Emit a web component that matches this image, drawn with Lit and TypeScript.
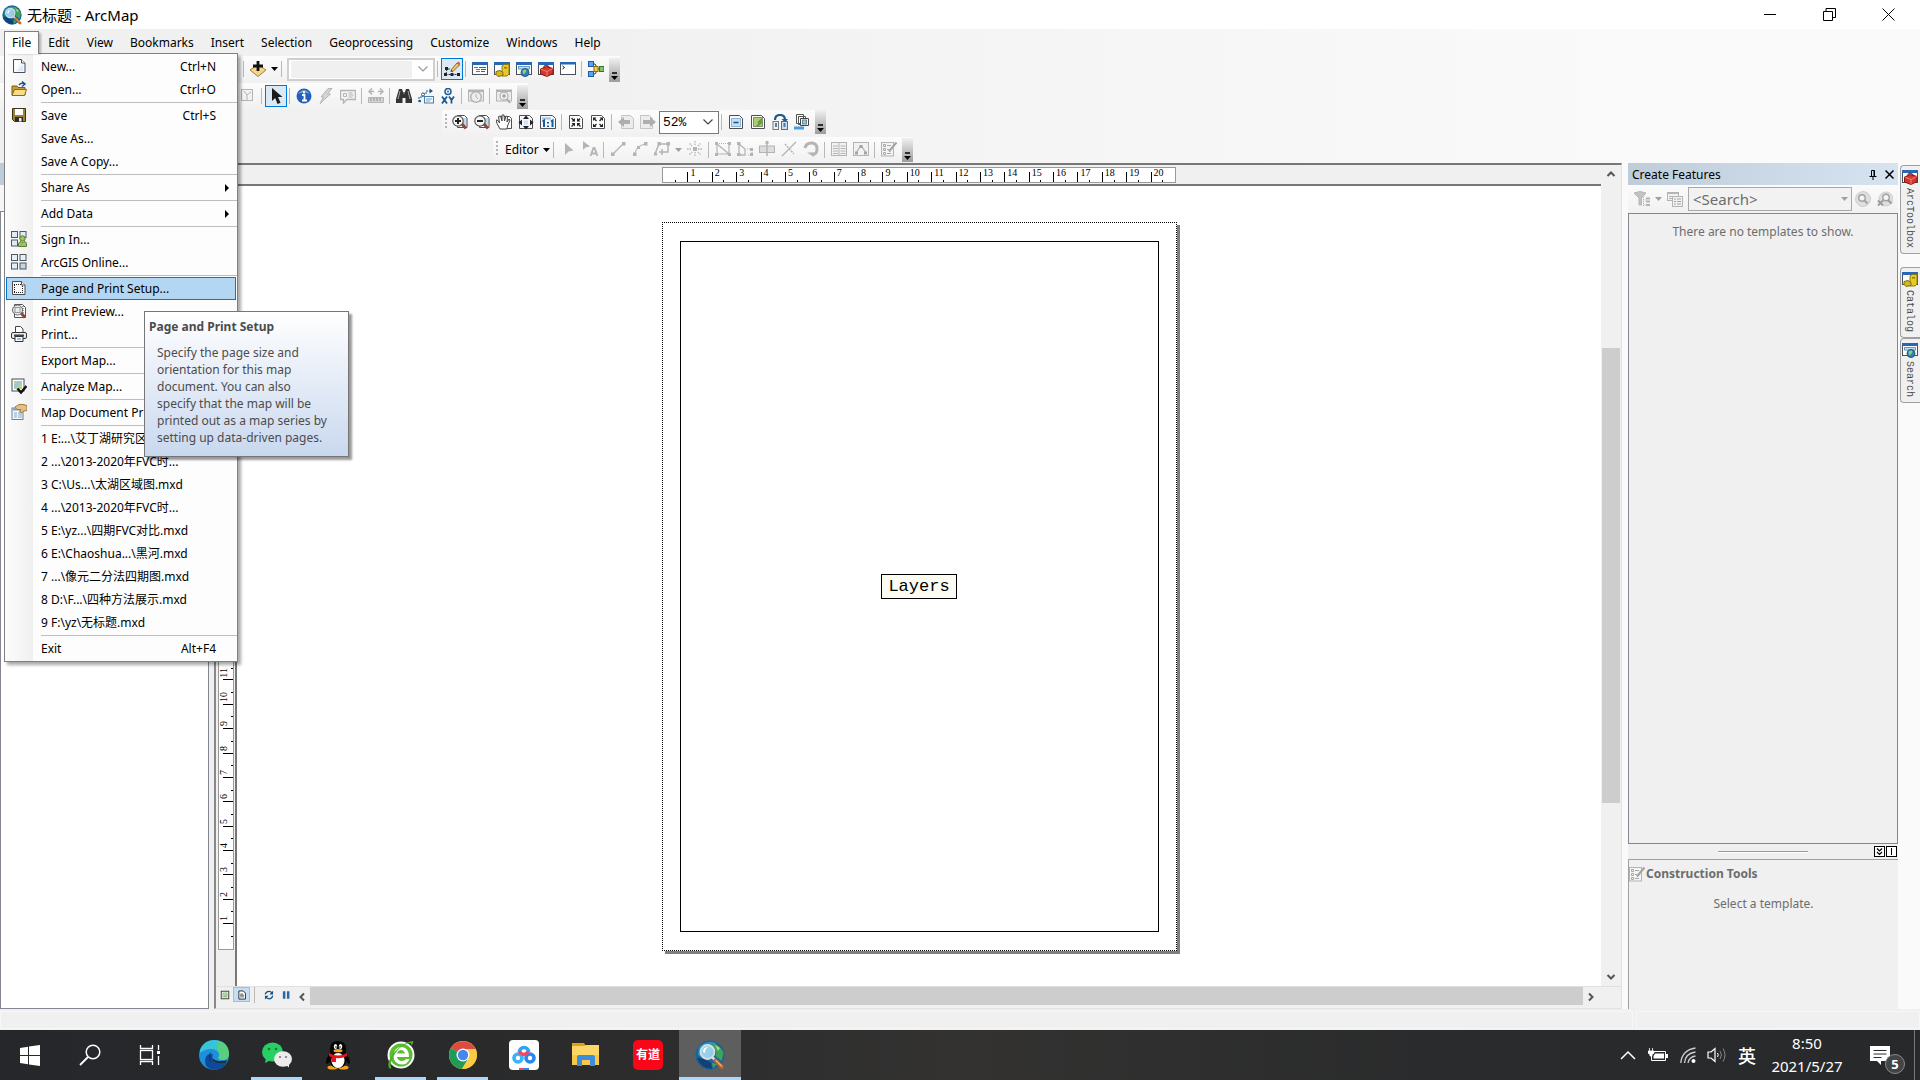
import { LitElement, html, css, svg, nothing, TemplateResult } from "lit";
import { customElement } from "lit/decorators.js";

const G = "#b4b4b4";
const page = (extra: unknown) => svg`<path d="M2.500 1.500h8l3.500 3.500v9.500h-11.500z" fill="#f4f8fd" stroke="#4d4d55"/><path d="M10.500 1.500v3.500h3.500" fill="#fff" stroke="#4d4d55"/>${extra}`;
const win = (extra: unknown) => svg`<rect x=".5" y="1.500" width="15" height="12" fill="#fdfdfd" stroke="#4b4f58"/><rect x="0" y="1" width="16" height="3" fill="#2767b5"/>${extra}`;
const lens = (extra: unknown) => svg`<path d="M5.500 1.500h7l2.500 2.500v9.500h-9.500z" fill="#fff" stroke="#4d4d55"/><rect x="10" y="4" width="4" height="7" fill="#b9dcf5"/><path d="M10 10l4 4.500" stroke="#8b4a35" stroke-width="3"/><circle cx="6" cy="7" r="5.200" fill="#f7f7f7" stroke="#555" stroke-width="1.200"/>${extra}`;
const globe = svg`<circle cx="15" cy="15" r="14.500" fill="#1a6496"/><path d="M4 7q7-7 17-4l-1 6-5 3-1 5-5 2-6-4z" fill="#2f8fb5"/><path d="M18 3q8 3 10.500 10l-2 8-6-5 1-4-4-4z" fill="#3fa35c"/><path d="M20 5l5 3-2 3z" fill="#a9dc7c"/><path d="M2 18q4 11 15 11l-1-6-7-4z" fill="#143f77"/><path d="M17 23l5 1-4 4z" fill="#3fa35c"/><circle cx="12.500" cy="12" r="7" fill="#a9dcf2" fill-opacity=".85" stroke="#d5dfe3" stroke-width="1.800"/><path d="M8 12q0-5 6-5-4 1-4 6z" fill="#fff"/><path d="M17.500 17.500l3 3" stroke="#ddd" stroke-width="2.500"/><path d="M20.500 20.500l6.500 6.500" stroke="#b5622c" stroke-width="4" stroke-linecap="round"/><path d="M21 20.500l5.500 5.500" stroke="#f0b277" stroke-width="1.300" stroke-linecap="round"/>`;

const ICONS: Record<string, unknown> = {
  new: page(svg`<path d="M4 13V3h5z" fill="#fff"/><path d="M12 6v7H6z" fill="#dbe9f6"/>`),
  open: svg`<path d="M1 14V5h5l1 1.500h7V14z" fill="#c79a32" stroke="#7a5c17"/><path d="M1 14.500l2.500-6h12l-2 6z" fill="#f6dc86" stroke="#8a6a22"/><path d="M8 4q2-2.500 5-1.500M11 .5l3 2.500-3 2.500" fill="none" stroke="#17528f" stroke-width="1.500"/>`,
  save: svg`<path d="M1.500 1.500h13v13h-11l-2-2z" fill="#9a8434" stroke="#3a3320"/><rect x="4" y="2" width="8" height="6" fill="#fff"/><rect x="4" y="10" width="8" height="4.500" fill="#2c2c2c"/><rect x="8" y="11" width="2.500" height="3.500" fill="#eee"/>`,
  grid: svg`<g stroke="#4f565e" fill="#e4eff8"><rect x=".5" y=".5" width="6" height="6"/><rect x="9" y=".5" width="6" height="6"/><rect x=".5" y="9" width="6" height="6"/><rect x="9" y="9" width="6" height="6" fill="#c4d6e6"/></g>`,
  signin: svg`<g stroke="#4f565e" fill="#dfecf6"><rect x=".5" y=".5" width="6" height="6"/><rect x="9" y=".5" width="6" height="6"/><rect x=".5" y="9" width="6" height="6"/></g><circle cx="11.500" cy="7.500" r="2.700" fill="#9cc068" stroke="#5d7f36"/><path d="M7.500 15.500v-3q1-2 2.500-2l1.500 1.500L13 10.500q2 0 2.500 2v3z" fill="#9cc068" stroke="#5d7f36"/>`,
  pagesetup: svg`<path d="M1.500 1.500h9l3.500 3.500v9.500H1.500z" fill="#f7f7f7" stroke="#4d4d55"/><path d="M10.500 1.500v3.500h3.500" fill="#fff" stroke="#4d4d55"/><path d="M3 4.500h7M3.500 5v8M3 12.500h9M11.500 6v7" stroke="#222" stroke-dasharray="1 1" fill="none"/>`,
  preview: svg`<path d="M3.500 1.500h8l3 3v10h-11z" fill="#fff" stroke="#555"/><path d="M10 10l4 4.500" stroke="#8b4a35" stroke-width="3"/><circle cx="6.500" cy="7" r="5" fill="#e6eaee" fill-opacity=".9" stroke="#666"/><rect x="4" y="4.500" width="5" height="5" fill="none" stroke="#999"/><path d="M12 3v8" stroke="#444" stroke-dasharray="1 1"/>`,
  print: svg`<path d="M4.500 6V.5h5l2.500 2.500V6" fill="#fff" stroke="#444"/><rect x=".5" y="6.500" width="15" height="6" rx="1.500" fill="#ececec" stroke="#333"/><rect x="3" y="8.500" width="10" height="2" fill="#444"/><path d="M4 10.500h8v5H4z" fill="#fff" stroke="#333"/><path d="M6 13h4" stroke="#3b77b5"/>`,
  analyze: svg`<rect x="1" y="1" width="12" height="12" fill="#fff" stroke="#4d4d55"/><rect x="3" y="3" width="8" height="8" fill="#b7d48c"/><path d="M3 11V7l4-4h4l-4 5z" fill="#9fc4de"/><path d="M6.500 10.500l3.500 4L15.500 8" fill="none" stroke="#111" stroke-width="2.500"/>`,
  props: svg`<rect x="1" y="4" width="11" height="11.500" fill="#f3f8fc" stroke="#6d8296"/><rect x="1.500" y="4.500" width="10" height="2" fill="#6fa3cf"/><path d="M3 9h3M7 9h4M3 11h3M7 11h4M3 13h3M7 13h4" stroke="#86a8c5"/><path d="M4 3l4-2.500h4l4 1v5l-3 .5-3 2-1.500-1L10 5.500H6z" fill="#e5bf86" stroke="#a47b43"/>`,
  adddata: svg`<path d="M0 9l8-5.500L16 9l-8 6.500z" fill="#f3d48a" stroke="#a4813c"/><path d="M8 0v10M3 5h10" stroke="#111" stroke-width="2.800"/>`,
  editor: svg`<path d="M1.500 13.500h13M2 13l1-5h3" fill="none" stroke="#333" stroke-dasharray="2 1"/><g fill="#222"><rect x="0" y="12" width="3" height="3"/><rect x="6.500" y="12" width="3" height="3"/><rect x="13" y="12" width="3" height="3"/><rect x="1" y="6" width="3" height="3"/></g><path d="M7 9l6-7 2.500 2L9 10.500z" fill="#f0c46a" stroke="#8f6a2c"/><path d="M13 2l1.500-1.500 2 2L15.500 4z" fill="#d05a50"/><path d="M6.500 11l.5-2 2 1.500z" fill="#333"/>`,
  toc: win(svg`<path d="M2 6.500h4M4 8.500h4M4 10.500h4" stroke="#3c7ec9"/><path d="M7 6.500h7M9 8.500h5M9 10.500h4" stroke="#2b66ac"/>`),
  catalog: win(svg`<path d="M8 5l2-1.500h5V13l-2 2H8z" fill="#e8c92c" stroke="#8f7a10"/><path d="M2 10.500l4-1 3 2v3l-5 1-2-2z" fill="#d2b91e" stroke="#7d6d12"/><rect x="10" y="6" width="3" height="1.500" fill="#8f7a10"/>`),
  search: win(svg`<rect x="2.500" y="5.500" width="11" height="2.500" fill="#bfe0f3" stroke="#6d9cc0"/><circle cx="9" cy="11.500" r="4" fill="#2f7fc0" stroke="#24577f"/><path d="M6.500 9.500q3-2 4 0l-1.500 3-2 .5z" fill="#8ed06e"/>`),
  toolbox: win(svg`<path d="M2.500 8l6-2.500 6.500 2v5L9 15.500 2.500 13z" fill="#d8352c" stroke="#7e1a15"/><path d="M2.500 8l6.500 2.500 6-3M9 10.500v5" stroke="#f08077" fill="none"/><path d="M6 6.500V5q3-1.500 5 .5v1" fill="none" stroke="#611"/>`),
  python: svg`<rect x=".5" y="1.500" width="15" height="12" fill="#fff" stroke="#4b4f58"/><rect x="0" y="1" width="16" height="2.500" fill="#2767b5"/><path d="M2.500 5l2 1.500-2 1.500" fill="none" stroke="#111"/>`,
  model: svg`<path d="M5 3h2l3 5M5 13h2l3-5h1" fill="none" stroke="#333"/><rect x=".5" y=".5" width="5" height="5" fill="#56a5ee" stroke="#1c5ea6"/><rect x=".5" y="10.500" width="5" height="5" fill="#56a5ee" stroke="#1c5ea6"/><rect x="6" y="5.500" width="4" height="5" fill="#f7d13c" stroke="#8b6d12"/><rect x="11.500" y="5.500" width="4.500" height="5" fill="#7fc35e" stroke="#35782a"/>`,
  layer: svg`<rect x="1.500" y="1.500" width="11" height="11" fill="#f2f2f2" stroke="${G}"/><path d="M4 3l3 4 4-3M7 7v5" stroke="${G}" fill="none"/>`,
  pointer: svg`<path d="M4 0v13l3.200-3 2.300 6 3-1.200L10 9h4.500z" fill="#1b1b1b"/>`,
  info: svg`<circle cx="8" cy="8" r="7.500" fill="#2560b8"/><path d="M2 6q6-8 12 0-6-3-12 0z" fill="#6e9fe0"/><path d="M8 3v2.500M6 7h2.500v5M6 12.500h5" stroke="#fff" stroke-width="1.800" fill="none"/>`,
  bolt: svg`<path d="M10 .5h4L9.500 6h3L2 15.500 5.500 9H3z" fill="#d4d4d4" stroke="${G}"/>`,
  popup: svg`<path d="M.5 2.500h15v9H7L3.500 15v-3.500h-3z" fill="#f3f3f3" stroke="${G}" stroke-width="1.300"/><path d="M3.500 5.500h3v3h-3zM8.500 5h4M8.500 7h5M8.500 9h4" stroke="${G}" fill="none"/>`,
  measure: svg`<path d="M1 3.500h5M10 3.500h5M4 .5L1 3.500l3 3M12 .5l3 3-3 3" stroke="${G}" stroke-width="1.500" fill="none"/><path d="M.5 9.500h15v5H.5z" fill="#d6d6d6" stroke="${G}"/><path d="M3 10v3M6 10v3M9 10v3M12 10v3" stroke="#8e8e8e"/>`,
  binoc: svg`<path d="M3 1h3l1 3h2l1-3h3l3 10v4H9.500v-5h-3v5H0v-4z" fill="#333"/><path d="M4 3L2 11M12 3l2 8M7 5h2" stroke="#aaa"/>`,
  route: svg`<path d="M1 14V9h4V6h3V3h5" fill="none" stroke="#1b5a94" stroke-dasharray="2 1"/><path d="M11.500.5L15 3l-3.500 2.500z" fill="#1b5a94"/><circle cx="5" cy="6.500" r="1.500" fill="#fff" stroke="#1b5a94"/><circle cx="1.800" cy="13" r="1.300" fill="#1b5a94"/><rect x="6.500" y="8.500" width="9" height="6.500" fill="#eef6fc" stroke="#4e7ea8"/><path d="M8 11h6M8 13h4" stroke="#7aa3c6"/>`,
  xy: svg`<circle cx="8" cy="3.500" r="3" fill="#fff" stroke="#1b5a94" stroke-width="1.500"/><circle cx="8" cy="3.500" r="1" fill="#1b5a94"/><path d="M2 8.500l5 7M7 8.500l-5 7M9 8.500l2.500 3.500v3.500M14 8.500L11.500 12" stroke="#1b5a94" stroke-width="1.800" fill="none"/>`,
  time: svg`<rect x=".5" y="2" width="15" height="11" fill="#ececec" stroke="${G}"/><path d="M0 3h16" stroke="${G}" stroke-width="2"/><circle cx="8" cy="9" r="5.300" fill="#eee" stroke="${G}" stroke-width="1.500"/><path d="M8 6v3l2 2" stroke="${G}" fill="none"/>`,
  viewer: svg`<rect x=".5" y="2" width="15" height="11" fill="#ececec" stroke="${G}"/><path d="M0 3h16" stroke="${G}" stroke-width="2"/><circle cx="8" cy="8" r="4" fill="#f4f4f4" stroke="${G}" stroke-width="1.300"/><path d="M6 8h4M8 6v4M11 11l3 4" stroke="#a4a4a4" stroke-width="1.500"/>`,
  zoomin: lens(svg`<path d="M3 7h6M6 4v6" stroke="#222" stroke-width="2"/>`),
  zoomout: lens(svg`<path d="M3 7h6" stroke="#222" stroke-width="2"/>`),
  pan: svg`<path d="M5.500 2.500h8l2 2v10h-10z" fill="#fff" stroke="#4d4d55"/><path d="M4 15L1 9.500 0 6l2 .5L3.500 9 2.500 2.500l2-.5L6 7V1l2 0 .5 6L10 2l1.500.5-.5 5.500L13 5l1 1-2.500 6L11 15z" fill="#fff" stroke="#444"/>`,
  full: svg`<path d="M1.500 1.500h10l3 3v10h-13z" fill="#f2f8fd" stroke="#4d4d55"/><path d="M8 1.500l3 3.500H5zM8 15.500L5 12h6zM.5 8.500L4 5.500v6zM15.500 8.500l-3.500-3v6z" fill="#222"/><path d="M6 6.500h4v4H6z" fill="#cde4f6"/>`,
  one: svg`<path d="M.5 1.500h12l3 3v10H.5z" fill="#f2f8fd" stroke="#4d4d55"/><path d="M2 4.500h9" stroke="#9ac3e6" stroke-width="2"/><path d="M2.500 7.500L4 6.500V13M11 7.500l1.500-1V13" stroke="#1b5a94" stroke-width="2" fill="none"/><path d="M7 8h2v1.500H7zM7 11.500h2V13H7z" fill="#1b5a94"/>`,
  shrink: svg`<path d="M1.500 1.500h10l3 3v10h-13z" fill="#fff" stroke="#4d4d55"/><path d="M3.500 4l3 3M12 4.500L9.500 7M3.500 12.500l3-3M12.500 12.500l-3-3" stroke="#222" stroke-width="1.300"/><path d="M7 4v3.500H3.500zM9 4v3.500h3.500zM7 12.500V9H3.500zM9 12.500V9h3.500z" fill="#222"/>`,
  grow: svg`<path d="M1.500 1.500h10l3 3v10h-13z" fill="#fff" stroke="#4d4d55"/><path d="M4.500 5l2 2M11.500 5l-2 2M4.500 12l2-2M11.500 12l-2-2" stroke="#222" stroke-width="1.300"/><path d="M3 3.500h3.500L3 7zM13 3.500H9.500L13 7zM3 13h3.500L3 9.500zM13 13H9.500L13 9.500z" fill="#222"/>`,
  back: svg`<path d="M3.500 1.500h9l3 3v10h-12z" fill="#ececec" stroke="#c4c4c4"/><path d="M0 8l6-5v3h6v4H6v3z" fill="#aeaeae"/>`,
  fwd: svg`<path d="M.5 1.500h9l3 3v10H.5z" fill="#ececec" stroke="#c4c4c4"/><path d="M16 8l-6-5v3H3v4h7v3z" fill="#aeaeae"/>`,
  draft: svg`<path d="M1.500 1.500h10l3 3v10h-13z" fill="#f6fafe" stroke="#4d4d55"/><rect x="3.500" y="4.500" width="9" height="8" fill="#c7ddf2" stroke="#8fb4d6"/><path d="M5.500 8.500h5" stroke="#1f4f86" stroke-width="1.500"/>`,
  focus: svg`<path d="M1.500 1.500h10l3 3v10h-13z" fill="#fff" stroke="#4d4d55"/><rect x="3.500" y="3.500" width="9" height="9" fill="#a9cf6b" stroke="#333" stroke-dasharray="1 1"/><path d="M8 9l4-4M7 12l5-4" stroke="#5e9f38" stroke-width="2"/>`,
  change: svg`<path d="M3 6q0-5 5-5t5 5" fill="none" stroke="#1b5a94" stroke-width="2.200"/><path d="M9.500 5h6.500l-3 3.500z" fill="#1b5a94"/><rect x="1" y="7.500" width="5.500" height="8" fill="#f2f2f2" stroke="#777"/><rect x="9.500" y="7.500" width="6" height="8" fill="#cde0f0" stroke="#4d7296"/><path d="M3 10h2M3 12h2M11.500 10h2M11.500 12h2" stroke="#1b5a94" stroke-width="1.500"/>`,
  ddp: svg`<path d="M2.500.5h7v9h-7zM4.500 2.500h7v8h-7z" fill="#fff" stroke="#555"/><path d="M6.500 4.500h8v7h-8z" fill="#fff" stroke="#444"/><rect x="8.500" y="6" width="4" height="4" fill="#a6cf8c" stroke="#5c88a8"/><rect x="0" y="12.500" width="10" height="3" fill="#4b9be0"/>`,
  editptr: svg`<path d="M5 2v12l3.500-3.500 5-1z" fill="${G}"/>`,
  editann: svg`<path d="M1 0v9l2.500-2.500 4.500-1z" fill="${G}"/><path d="M8.500 15l3-8h1l3 8M9.500 12.500h5" stroke="${G}" stroke-width="1.800" fill="none"/>`,
  line: svg`<path d="M3 13L13 3" stroke="${G}" stroke-width="1.200"/><rect x="1" y="11.500" width="3.500" height="3.500" fill="${G}"/><rect x="12" y="1" width="3.500" height="3.500" fill="${G}"/>`,
  arc: svg`<path d="M3 13Q4 5 13 3" stroke="${G}" fill="none" stroke-width="1.200"/><rect x="1" y="11.500" width="3.500" height="3.500" fill="${G}"/><rect x="5" y="5" width="3" height="3" fill="${G}"/><rect x="12" y="1" width="3.500" height="3.500" fill="${G}"/>`,
  trace: svg`<path d="M1 13L5 3h9v8h-3" stroke="${G}" fill="none" stroke-width="1.500"/><rect x="3.500" y="1" width="3.500" height="3.500" fill="${G}"/><rect x="12.500" y="1" width="3.500" height="3.500" fill="${G}"/><path d="M8 8v6M5 11h6" stroke="${G}" stroke-width="1.500"/><rect x="0" y="11.500" width="3" height="3" fill="${G}"/>`,
  point: svg`<rect x="6" y="6" width="4" height="4" fill="${G}"/><path d="M8 0v5M8 11v5M0 8h5M11 8h5M2.500 2.500L5 5M11 11l2.500 2.500M2.500 13.500L5 11M11 5l2.500-2.500" stroke="${G}" stroke-width="1.300" stroke-dasharray="1.500 1"/>`,
  vertices: svg`<path d="M2 2.500h12" stroke="${G}" stroke-dasharray="1 1"/><path d="M2 3v10h12L2 3M14 3v10" stroke="${G}" fill="none" stroke-width="1.200"/><g fill="${G}"><rect x="0" y="1" width="3" height="3"/><rect x="13" y="1" width="3" height="3"/><rect x="0" y="12" width="3" height="3"/><rect x="13" y="12" width="3" height="3"/></g>`,
  reshape: svg`<path d="M2 2v12M2 3l6 5v6H2" stroke="${G}" fill="none" stroke-width="1.300"/><path d="M10 8h5v6h-5" stroke="${G}" fill="none" stroke-dasharray="1 1"/><g fill="${G}"><rect x="0" y="1" width="3.500" height="3"/><rect x="0" y="12" width="3.500" height="3"/><rect x="13" y="7" width="3" height="3"/><rect x="13" y="12" width="3" height="3"/></g>`,
  cut: svg`<rect x=".5" y="5" width="15" height="6.500" fill="#ddd" stroke="${G}"/><path d="M8 1v14" stroke="${G}" stroke-width="1.500"/><rect x="6.500" y="0" width="3" height="3" fill="${G}"/>`,
  split: svg`<path d="M1 15L15 1" stroke="${G}" stroke-width="1.300"/><path d="M4 3l9 10" stroke="${G}" stroke-dasharray="2 1" stroke-width="1.500"/>`,
  rotate: svg`<path d="M2 7q1-5 6.500-5T14 8t-5 5" fill="none" stroke="${G}" stroke-width="3"/><path d="M4 11.500h7V16z" fill="${G}"/>`,
  table: svg`<rect x=".5" y="1.500" width="15" height="13" fill="#f2f2f2" stroke="${G}"/><path d="M8 2v12M2 5h5M2 7.500h5M2 10h5M2 12.500h5M9.500 5h5M9.500 7.500h5M9.500 10h5M9.500 12.500h5" stroke="${G}"/>`,
  sketch: svg`<rect x=".5" y="1.500" width="15" height="13" fill="#f2f2f2" stroke="${G}"/><path d="M3 12l4-6h2l4 6" fill="none" stroke="${G}" stroke-width="1.300"/><g fill="#a4a4a4"><rect x="2" y="10.500" width="3" height="3"/><rect x="6.500" y="4" width="3" height="3"/><rect x="11" y="10.500" width="3" height="3"/></g>`,
  create: svg`<rect x=".5" y="1.500" width="12" height="13.500" fill="#f4f4f4" stroke="${G}"/><path d="M2.500 3.500h2v2h-2zM2.500 7.500h2v2h-2zM2.500 11.500h2v2h-2zM6 4.500h4M6 8.500h2M6 12.500h4" stroke="#a8a8a8" fill="none"/><path d="M8 10.500l7.500-9" stroke="#a4a4a4" stroke-width="2.200"/>`,
  filter: svg`<path d="M0 2q6-3 12 0L7.500 7v7H5V7z" fill="#c3c3c3" stroke="${G}"/><path d="M9.500 6v9M9.500 9h3M9.500 14h3" stroke="${G}" stroke-dasharray="1 1" fill="none"/><path d="M12 7.500h4M12 10.500h4M12 14h4" stroke="${G}" stroke-width="1.800"/>`,
  organize: svg`<rect x=".5" y="1.500" width="11" height="8" fill="#f2f2f2" stroke="${G}"/><path d="M0 2h12" stroke="${G}" stroke-width="2"/><path d="M2 5.500h3M2 7.500h3" stroke="${G}"/><rect x="5.500" y="5.500" width="10" height="10" fill="#f2f2f2" stroke="${G}"/><path d="M7 8h2M10 8h4M7 10.500h2M10 10.500h4M7 13h2M10 13h4" stroke="#a4a4a4"/>`,
  find: svg`<circle cx="8" cy="8" r="7.500" fill="#dedede" stroke="#cfcfcf"/><circle cx="7" cy="7" r="3.200" fill="#f4f4f4" stroke="#a2a2a2" stroke-width="1.400"/><path d="M9.500 9.500l3 3" stroke="#a2a2a2" stroke-width="2"/>`,
  clearfind: svg`<circle cx="9" cy="8" r="7" fill="#dedede" stroke="#cfcfcf"/><circle cx="9" cy="6.500" r="3.200" fill="#f4f4f4" stroke="#a2a2a2" stroke-width="1.400"/><path d="M11 9l3.500 3.500M1 9.500l5 5M6 9.500l-5 5" stroke="#9c9c9c" stroke-width="2"/>`,
  dataview: svg`<rect x="2" y="2" width="12" height="12" fill="#fff" stroke="#444" stroke-width="1.600"/><rect x="4" y="4" width="8" height="8" fill="#9cc76a"/><path d="M4 12V8l4-4h4l-5 5z" fill="#a9cfe8"/>`,
  layoutview: svg`<path d="M3 1.500h7l3.500 3.500v9.500H3z" fill="#fff" stroke="#333" stroke-width="1.600"/><path d="M5 6.500h5M5 8.500h6M5 11h6" stroke="#444" stroke-width="1.300"/>`,
  refresh: svg`<path d="M2 7q1-5 6-5 3 0 5 2.500M14 9q-1 5-6 5-3 0-5-2.500" fill="none" stroke="#174f8a" stroke-width="2"/><path d="M14.500 1v6h-6zM1.500 15V9h6z" fill="#174f8a"/>`,
  pause: svg`<path d="M3 2h4v12H3zM9.500 2h4v12h-4z" fill="#2c66a8"/>`,
};

const TASK: Record<string, unknown> = {
  start: svg`<path d="M5 8l8-1.200V15H5zM14 6.600L25 5v10H14zM5 16h8v8.200L5 23zM14 16h11v10l-11-1.600z" fill="#fff"/>`,
  find: svg`<circle cx="18" cy="12" r="6.800" fill="none" stroke="#fff" stroke-width="1.500"/><path d="M13 17l-8 8" stroke="#fff" stroke-width="1.800"/>`,
  view: svg`<g fill="none" stroke="#fff" stroke-width="1.300"><path d="M5.500 5v3.500h12V5M5.500 25v-3.500h12V25"/><rect x="5.500" y="10.500" width="12" height="9"/><path d="M23.500 5v5M23.500 16v9"/></g><path d="M22 11h3v3h-3z" fill="#fff"/>`,
  edge: svg`<circle cx="15" cy="15" r="15" fill="#1d8fdc"/><path d="M1 10Q5 0 15 0q14 0 15 14 0 5-5 6-5 0-6-2 2-2 1-4-2-5-8-5T1 13z" fill="#37c3d8"/><path d="M18 1q12 2 12 13 0 5-5 6-5 0-6-2 3-3 0-7 0-5-1-10z" fill="#65d35f" fill-opacity=".75"/><path d="M11 14q-2 9 6 11 7 1 11-3-5 8-13 8-9-1-9-9 0-6 5-7z" fill="#0d4a9c"/><path d="M13 12q-3 2 0 6 4 4 9 3 4 0 6-1l-1 3q-5 3-9 2-8-1-8-9 0-3 3-4z" fill="#27292b"/><path d="M14 14q-3 9 8 9 4 0 6-1-3 4-9 4-8-1-8-9 0-3 3-3z" fill="#0d4a9c"/>`,
  wechat: svg`<ellipse cx="10.500" cy="12" rx="10.500" ry="9.500" fill="#28cf63"/><path d="M4 18l-1 5 6-3z" fill="#28cf63"/><circle cx="7" cy="9" r="1.300" fill="#187a3b"/><circle cx="14" cy="9" r="1.300" fill="#187a3b"/><ellipse cx="21" cy="19" rx="9" ry="7.800" fill="#ececec"/><path d="M24 25l3 2.500v-5z" fill="#ececec"/><circle cx="18" cy="17" r="1.100" fill="#777"/><circle cx="24" cy="17" r="1.100" fill="#777"/>`,
  qq: svg`<ellipse cx="9.500" cy="27.500" rx="5" ry="2" fill="#f5a51c"/><ellipse cx="20.500" cy="27.500" rx="5" ry="2" fill="#f5a51c"/><path d="M7 12Q6 1 15 1t8 11l3 6q2 5 0 6-2-1-3-3 0 7-8 7t-8-7q-1 2-3 3-2-1 0-6z" fill="#050505"/><ellipse cx="15" cy="20.500" rx="6.500" ry="7.500" fill="#fff"/><ellipse cx="12.500" cy="6.500" rx="1.700" ry="2.600" fill="#fff"/><ellipse cx="17.500" cy="6.500" rx="1.700" ry="2.600" fill="#fff"/><circle cx="13" cy="7" r=".8"/><circle cx="17" cy="7" r=".8"/><ellipse cx="15" cy="10.700" rx="4.500" ry="1.600" fill="#f7a81b"/><path d="M6 13q9 5 18 0v3q-6 3-11 2v4H9v-5q-2 0-3-1z" fill="#e8131c"/>`,
  browser: svg`<circle cx="15" cy="15" r="13.500" fill="#fff"/><circle cx="15" cy="15" r="11.500" fill="#5abf2f"/><path d="M23 17H11q1 4 5 4 3 0 4-2h3.500q-2 5.500-7.500 5.500-8 0-8.500-8.500Q8 7 15.500 7 23 7.500 23 17zM11 13.500h8q-1-3.500-4-3.500t-4 3.500z" fill="#fff"/><path d="M3 28Q0 22 9 11.500 18 2 27 1q1 2-2 5 1-3-1-3-6 0-13 8Q3 21 5 27q1 3-2 1z" fill="#4aae25"/>`,
  chrome: svg`<circle cx="15" cy="15" r="14" fill="#f8cc46"/><path d="M15 15L2.900 8A14 14 0 0 1 27.500 9H15z" fill="#dd4b3e"/><path d="M15 15L2.900 8A14 14 0 0 0 14 29l6-10z" fill="#1f9d58"/><path d="M15 9h12.500A14 14 0 0 1 14 29l6.500-11z" fill="#f8cc46"/><circle cx="15" cy="15" r="6.500" fill="#fff"/><circle cx="15" cy="15" r="5.200" fill="#4686ee"/>`,
  netdisk: svg`<rect width="30" height="30" rx="4" fill="#fff"/><g fill="none" stroke-width="3.600"><circle cx="9" cy="18" r="4" stroke="#37b5f7"/><circle cx="21" cy="18" r="4" stroke="#2b86ee"/><path d="M10.500 12a4.500 4.500 0 1 1 9 0" stroke="#2aa6f4"/><path d="M10.500 11.500q4 6 9 0" stroke="#f04a6a"/></g><path d="M10 28h5v2h-5z" fill="#f04a6a"/><path d="M15 28h5v2h-5z" fill="#2b86ee"/>`,
  folder: svg`<path d="M1 3h12l2 3v3H1z" fill="#dda01b"/><path d="M1 6h12l2-1h13v20H1z" fill="#fcd667"/><path d="M1 15h27v10H1z" fill="#f8c848"/><path d="M6 26V17q0-2 2-2h14q2 0 2 2v9h-5v-6h-8v6z" fill="#3b8ede"/>`,
  arcmap: globe,
};

const icon = (n: string) => html`<svg class="i16" viewBox="0 0 16 16" aria-hidden="true">${ICONS[n]}</svg>`;
const caret = html`<svg class="caret" viewBox="0 0 7 4" aria-hidden="true"><path d="M0 0h7L3.500 4z" fill="currentColor" /></svg>`;
const chevron = html`<svg class="chev" viewBox="0 0 10 6" aria-hidden="true"><path d="M.5.5L5 5 9.500.5" fill="none" stroke="currentColor" stroke-width="1.200" /></svg>`;
const sep = html`<i class="sep"></i>`;
const more = html`<button class="more" aria-label="Toolbar options"><svg viewBox="0 0 7 8" width="7" height="8"><path d="M1 1h5" stroke="#000" stroke-width="1.500" /><path d="M0 4h7L3.500 8z" /></svg></button>`;
const grip = html`<i class="grip"></i>`;
const btn = (n: string, label: string, on = false) => html`<button class="tb ${on ? "on" : ""}" aria-label=${label}>${icon(n)}</button>`;

type Entry = { t: string; k?: string; i?: string; sub?: boolean; hot?: boolean } | null;
const FILE_MENU: Entry[] = [
  { t: "New...", k: "Ctrl+N", i: "new" }, { t: "Open...", k: "Ctrl+O", i: "open" }, null,
  { t: "Save", k: "Ctrl+S", i: "save" }, { t: "Save As..." }, { t: "Save A Copy..." }, null,
  { t: "Share As", sub: true }, null, { t: "Add Data", sub: true }, null,
  { t: "Sign In...", i: "signin" }, { t: "ArcGIS Online...", i: "grid" }, null,
  { t: "Page and Print Setup...", i: "pagesetup", hot: true }, { t: "Print Preview...", i: "preview" }, { t: "Print...", i: "print" }, null,
  { t: "Export Map..." }, null, { t: "Analyze Map...", i: "analyze" }, null,
  { t: "Map Document Pr", i: "props" }, null,
  { t: "1 E:...\\艾丁湖研究区" }, { t: "2 ...\\2013-2020年FVC时..." }, { t: "3 C:\\Us...\\太湖区域图.mxd" },
  { t: "4 ...\\2013-2020年FVC时..." }, { t: "5 E:\\yz...\\四期FVC对比.mxd" }, { t: "6 E:\\Chaoshua...\\黑河.mxd" },
  { t: "7 ...\\像元二分法四期图.mxd" }, { t: "8 D:\\F...\\四种方法展示.mxd" }, { t: "9 F:\\yz\\无标题.mxd" }, null,
  { t: "Exit", k: "Alt+F4" },
];

@customElement("app-root")
export class AppRoot extends LitElement {
  static styles = css`
    :host { display: flex; flex-direction: column; min-height: 100vh; background: linear-gradient(90deg, #f0f0f0, #f1f1f1 30%, #fafafa 85%);
      font: 12px/16px "Noto Sans", "Noto Sans CJK SC", sans-serif; color: #000; }
    * { box-sizing: border-box; }
    button, input, select { font: inherit; color: inherit; border: 0; padding: 0; margin: 0; background: none; border-radius: 0; }
    svg { display: block; flex: none; }
    .i16 { width: 16px; height: 16px; }
    .caret { width: 7px; height: 4px; }
    .chev { width: 10px; height: 6px; }

    .title { display: flex; align-items: center; height: 29px; background: #fff; padding-left: 2px; gap: 5px; font-size: 15px; }
    .title h1 { flex: 1; margin: 0; font-size: 15px; line-height: 28px; font-weight: 400; }
    .title .wbtn { width: 58px; height: 29px; display: grid; place-items: center; margin-right: 1px; }
    .title .wbtns { display: flex; padding-right: 2px; }

    .menubar { display: flex; gap: 1px; height: 27px; padding: 2px 4px 2px; position: relative; z-index: 5; }
    .menubar .top { height: 23px; padding: 0 8px; }
    .menubar .top.open { background: #fdfdfd; border: 1px solid #808080; border-bottom: 0; padding: 0 7px 1px; position: relative; z-index: 3; box-shadow: 3px 1px 2px -1px #0004; }
    .filemenu { position: absolute; z-index: 2; left: 4px; top: 24px; width: 234px; margin: 0; padding: 1px 0; list-style: none; border: 1px solid #808080;
      background: linear-gradient(90deg, #fcfcfc, #f0f0f0 28px, #fdfdfd 28px); box-shadow: 3px 3px 3px #0005; }
    .filemenu li { position: relative; padding: 0 1px; }
    .filemenu .rule { height: 3px; padding: 1px 0 1px 36px; }
    .filemenu .rule::before { content: ""; display: block; height: 1px; background: #bdbdbd; }
    .entry { display: flex; align-items: center; width: 100%; height: 23px; padding: 0 19px 0 4px; border: 1px solid transparent; text-align: left; white-space: nowrap; }
    .entry .pic { width: 30px; height: 16px; margin-top: -2px; }
    .entry .txt { margin-right: auto; }
    .entry.sub { padding-right: 6px; }
    .entry.hot { background: #b3d7f3; border-color: #0078d7; }
    .tip { position: absolute; left: 139px; top: 34px; width: 205px; padding: 6px 4px 10px; color: #4c4c4c; border: 1px solid #767676; z-index: 4;
      background: linear-gradient(#fff, #c9d8ef); box-shadow: 3px 3px 2px #0006; white-space: nowrap; line-height: 17px; }
    .tip strong { display: block; margin-bottom: 9px; }
    .tip p { margin: 0 0 0 8px; }

    .dock { display: flex; flex-direction: column; gap: 1px; height: 107px; align-items: flex-start; }
    .bar { display: flex; align-items: center; height: 26px; background: linear-gradient(#fcfcfc, #f1f1f1); }
    .bar.one { padding-left: 241px; }
    .bar.two { padding-left: 237px; }
    .bar.three { margin-left: 442px; padding-bottom: 2px; }
    .bar.four { margin-left: 493px; padding-bottom: 1px; }
    .tb { width: 22px; height: 22px; display: grid; place-items: center; margin-bottom: 1px; }
    .tb.on { background: #dbe9f5; border: 1px solid #0078d7; }
    .drop { width: 10px; height: 22px; display: grid; place-items: center; }
    .drop.off { width: 11px; color: #a0a0a0; }
    .sep { width: 6px; height: 16px; padding: 0 3px 0 2px; }
    .sep::before { content: ""; display: block; width: 1px; height: 16px; background: #b9b9b9; }
    .grip { width: 7px; height: 17px; padding-left: 3px; }
    .grip::before { content: ""; display: block; width: 2px; height: 15px; background: repeating-linear-gradient(#b4b4b4 0 2px, transparent 2px 4px); }
    .more { align-self: flex-end; width: 11px; height: 24px; margin-left: 2px; background: linear-gradient(#f0f0f0, #9c9c9c); display: flex; align-items: flex-end; justify-content: center; padding-bottom: 2px; }
    .combo { display: grid; grid-template-columns: 1fr 20px; align-items: center; height: 23px; background: #fff; border: 1px solid #7a7a7a; color: #444; }
    .combo select { grid-area: 1 / 1 / 2 / 3; appearance: none; width: 100%; height: 100%; padding-left: 3px; color: #000; font: 13px "Liberation Mono", monospace; }
    .combo .chev { grid-area: 1 / 2; justify-self: center; pointer-events: none; }
    .combo.scale { width: 148px; margin: 0 0 0 2px; border: 2px solid #cfcfcf; color: #999; }
    .combo.scale select { height: 17px; opacity: 1; background: linear-gradient(90deg, #f0f0f0 121px, #fff 121px) 2px 0 no-repeat; }
    .combo.scale .chev { z-index: 1; }
    .combo.zoom { width: 60px; }
    .editor { display: flex; align-items: center; gap: 4px; padding: 0 0 0 5px; height: 22px; width: 51px; }

    .work { flex: 1; display: grid; grid-template-columns: 209px 5px minmax(0, 1fr) 6px 270px 22px; min-height: 846px; }
    .pane-head { height: 22px; background: linear-gradient(90deg, #bfcddb, #d6e3f0); display: flex; align-items: center; padding-left: 4px; }
    .toc { display: flex; flex-direction: column; background: #f0f0f0; }
    .toc .tools { height: 26px; background: #f6f6f6; }
    .toc .tree { flex: 1; background: #fff; border: 1px solid #828790; }
    .split { background: #f0f0f0; }
    .view { display: grid; grid-template: 21px minmax(0, 1fr) 22px / 21px minmax(0, 1fr) 20px; background: #f0f0f0; border-left: 2px solid #888; border-top: 2px solid #777; border-right: 1px solid #e2e2e2; border-bottom: 1px solid #e2e2e2; }
    .hruler { grid-column: 1 / 3; padding: 2px 0 1px 21px; border-bottom: 2px solid #777; display: flex; justify-content: center; }
    .vruler { border-right: 2px solid #777; padding-left: 2px; display: flex; align-items: center; }
    .hscale { display: grid; grid-template-columns: repeat(21, minmax(0, 1fr)); width: 514px; height: 16px; background: #fff; border: 1px solid #999; font: 10px/10px "Liberation Serif", serif; }
    .vscale { display: flex; flex-direction: column-reverse; width: 16px; height: 727px; background: #fff; border: 1px solid #999; font: 10px/10px "Liberation Serif", serif; }
    .cm { display: flex; padding: 0 0 0 3px; background: linear-gradient(#000, #000) 0 4px / 1px 11px no-repeat, linear-gradient(#000, #000) 50% 100% / 1px 2px no-repeat; }
    .cm.first { background: linear-gradient(#000, #000) 50% 100% / 1px 2px no-repeat; }
    .vcm { flex: 10 1 0; min-height: 0; padding-bottom: 3px; writing-mode: sideways-lr;
      background: linear-gradient(#000, #000) 4px 100% / 11px 1px no-repeat, linear-gradient(#000, #000) 100% 50% / 2px 1px no-repeat; }
    .vcm.first { background: linear-gradient(#000, #000) 100% 50% / 2px 1px no-repeat; }
    .vcm.last { flex-grow: 7; }
    .canvas { background: #fff; display: grid; place-items: center; }
    .paper { width: 515px; height: 729px; border: 1px dotted #000; padding: 18px 17px; box-shadow: 3px 3px 0 #808080; background: #fff; display: grid; }
    .frame { border: 1px solid #000; display: grid; place-items: center; }
    .frame span { border: 1px solid #000; background: #fcfcf2; font: 17px/23px "Liberation Mono", monospace; padding: 0 6px; }
    .vscroll { grid-column: 3; grid-row: 1 / 3; display: flex; flex-direction: column; align-items: stretch; padding: 0 1px; }
    .vscroll button { height: 18px; display: grid; place-items: center; }
    .vscroll .a { flex: 165; } .vscroll .t { flex: 456; background: #cdcdcd; }
    .bottom { grid-column: 1 / 4; display: flex; align-items: flex-start; border-top: 1px solid #e0e0e0; }
    .bottom .mini { width: 17px; height: 15px; display: grid; place-items: center; }
    .bottom .mini svg { width: 10px; height: 10px; }
    .bottom .mini.on { background: #c4dff5; border: 1px solid #8fc3ee; }
    .bottom .sep { height: 14px; margin: 0 2px; }
    .bottom .track { flex: 1; height: 18px; background: #cdcdcd; }
    .bottom .arrow { width: 16px; height: 19px; display: grid; place-items: center; }
    .bottom .gap { width: 22px; }

    .create { display: flex; flex-direction: column; background: #f0f0f0; color: #6d6d6d; }
    .create .pane-head { color: #000; justify-content: space-between; padding: 1px 4px 0; }
    .create .pane-head h2 { margin: 0; font-size: 12px; font-weight: 400; }
    .create .pane-head div { display: flex; gap: 8px; }
    .create .ctools { display: flex; align-items: center; height: 28px; padding: 0 2px 0 3px; background: linear-gradient(#fbfbfb, #f1f1f1); }
    .searchbox { flex: 1; display: grid; grid-template-columns: minmax(0, 1fr) 14px; align-items: center; height: 24px; border: 1px solid #a8a8a8; background: #f2f2f2; margin-left: 2px; color: #a0a0a0; }
    .searchbox input { width: 100%; height: 22px; padding-left: 4px; font-size: 15px; line-height: 20px; color: #6d6d6d; }
    .searchbox input::placeholder { color: #6d6d6d; opacity: 1; }
    .searchbox .caret { justify-self: center; }
    .tlist { flex: 1; border: 1px solid #828790; text-align: center; padding-top: 10px; }
    .tlist p, .construct p { margin: 0; }
    .splitter { height: 15px; display: flex; align-items: center; justify-content: flex-end; gap: 1px; padding: 0 1px 0 90px; }
    .splitter hr { width: 90px; height: 2px; background: #9b9b9b; border: 0; border-bottom: 1px solid #fff; margin: 0 auto 0 0; }
    .splitter button { width: 11px; height: 11px; border: 1px solid #000; display: grid; place-items: center; background: #fff; }
    .construct { height: 150px; border-top: 1px solid #a0a0a0; border-left: 1px solid #a0a0a0; text-align: center; }
    .construct h3 { margin: 5px 0 13px; display: flex; align-items: center; gap: 1px; font-size: 12px; height: 18px; }
    .tabs { display: flex; flex-direction: column; align-items: stretch; padding: 2px 0 0 2px; color: #4c4c4c; }
    .tab { display: flex; flex-direction: column; align-items: flex-start; gap: 3px; padding: 3px 0 4px 1px; border: 1px solid #a0a0a0; border-right: 0; border-radius: 4px 0 0 4px; background: #f0f0f0; font: 10px/14px "Liberation Mono", monospace; }
    .tab span { writing-mode: vertical-rl; }
    .tab.arc { height: 89px; margin-bottom: 13px; }
    .tab.cat { height: 71px; }
    .tab.sea { height: 65px; }

    .status { height: 21px; background: #f0f0f0; display: flex; gap: 3px; padding: 2px 0 1px; }
    .status div { border: 1px solid #f6f6f6; flex: 1; }
    .status div + div { flex: 0 0 284px; }

    .task { height: 50px; display: flex; background: linear-gradient(90deg, #25272a, #2b2b2c 30%, #333231 50%, #2a2b2c 75%, #27292b); color: #fff; }
    .app { width: 62px; height: 50px; padding: 0 5px; display: grid; place-items: center; }
    .app svg { width: 30px; height: 30px; }
    .app.sys { width: 60px; }
    .app.edge { margin-left: 3px; width: 62px; }
    .app.run { border-bottom: 3px solid #a9d8fb; width: 51px; margin: 0 5px 0 6px; padding: 3px 0 0; }
    .app.active { background: #5e5e5e; border-bottom: 3px solid #a9d8fb; padding-top: 3px; }
    .app .yd { width: 30px; height: 30px; border-radius: 5px; background: #fb0619; font: 700 12px/28px "Noto Sans CJK SC", sans-serif; }
    .tray { margin-left: auto; display: flex; align-items: center; }
    .tray button { height: 50px; display: grid; place-items: center; }
    .t30 { width: 30px; } .t28 { width: 28px; }
    .ime { width: 32px; font: 500 18px/24px "Noto Sans CJK SC", sans-serif; }
    .clock { width: 88px; font-size: 15px; line-height: 23px; }
    .bell { width: 58px; position: relative; margin-right: 5px; }
    .badge { position: absolute; left: 34px; top: 24px; width: 20px; height: 20px; border-radius: 50%; background: #434445; border: 1px solid #8b8b8b; font: 700 13px/18px "Noto Sans", sans-serif; }
    .peek { width: 6px; border-left: 1px solid #777; align-self: stretch; }
  `;

  private entry(e: Entry): TemplateResult {
    if (!e) return html`<li class="rule" role="separator"></li>`;
    return html`<li>
      <button class="entry ${e.hot ? "hot" : ""} ${e.sub ? "sub" : ""}">
        <span class="pic">${e.i ? icon(e.i) : nothing}</span><span class="txt">${e.t}</span>
        ${e.k ? html`<span>${e.k}</span>` : nothing}
        ${e.sub ? html`<svg width="4" height="8" viewBox="0 0 4 8"><path d="M0 0l4 4-4 4z" /></svg>` : nothing}
      </button>
      ${e.hot ? html`<div class="tip" role="tooltip"><strong>Page and Print Setup</strong>
        <p>Specify the page size and<br />orientation for this map<br />document. You can also<br />specify that the map will be<br />printed out as a map series by<br />setting up data-driven pages.</p></div>` : nothing}
    </li>`;
  }

  private arrow(d: string) {
    return html`<svg width="10" height="10" viewBox="0 0 10 10"><path d=${d} fill="none" stroke="#555" stroke-width="2" /></svg>`;
  }

  private app(name: string, label: string, cls = "") {
    return html`<button class="app ${cls}" aria-label=${label}><svg viewBox="0 0 30 30">${TASK[name]}</svg></button>`;
  }

  render() {
    const menus = ["Edit", "View", "Bookmarks", "Insert", "Selection", "Geoprocessing", "Customize", "Windows", "Help"];
    const hcm = Array.from({ length: 21 }, (_, i) => i);
    const vcm = Array.from({ length: 30 }, (_, i) => i);
    return html`
      <header class="title">
        <svg width="20" height="20" viewBox="0 0 30 30">${globe}</svg>
        <h1>无标题 - ArcMap</h1>
        <div class="wbtns">
          <button class="wbtn" aria-label="Minimize"><svg width="12" height="12"><path d="M0 5.500h12" stroke="#000" /></svg></button>
          <button class="wbtn" aria-label="Restore"><svg width="13" height="13"><path d="M.5 3.500h9v9h-9zM3 3V.5h9.500v9H10" fill="none" stroke="#000" /></svg></button>
          <button class="wbtn" aria-label="Close"><svg width="13" height="13"><path d="M.5.5l12 12M12.500.5l-12 12" stroke="#000" /></svg></button>
        </div>
      </header>
      <nav class="menubar">
        <button class="top open">File</button>
        ${menus.map((m) => html`<button class="top">${m}</button>`)}
        <ul class="filemenu">${FILE_MENU.map((e) => this.entry(e))}</ul>
      </nav>
      <section class="dock">
        <div class="bar one">${sep}${btn("adddata", "Add Data")}<button class="drop" aria-label="Add Data options">${caret}</button>${sep}
          <div class="combo scale"><select aria-label="Map scale" disabled></select>${chevron}</div>${sep}
          ${btn("editor", "Editor Toolbar", true)}${sep}${btn("toc", "Table Of Contents")}${btn("catalog", "Catalog")}${btn("search", "Search")}${btn("toolbox", "ArcToolbox")}${btn("python", "Python")}${sep}${btn("model", "ModelBuilder")}${more}</div>
        <div class="bar two">${btn("layer", "Clear Selection")}${sep}${btn("pointer", "Select Elements", true)}${sep}${btn("info", "Identify")}${btn("bolt", "Hyperlink")}${btn("popup", "HTML Popup")}${sep}${btn("measure", "Measure")}${sep}${btn("binoc", "Find")}${btn("route", "Find Route")}${btn("xy", "Go To XY")}${sep}${btn("time", "Time Slider")}${sep}${btn("viewer", "Viewer Window")}${more}</div>
        <div class="bar three">${grip}${btn("zoomin", "Zoom In")}${btn("zoomout", "Zoom Out")}${btn("pan", "Pan")}${btn("full", "Zoom Whole Page")}${btn("one", "Zoom to 100%")}${sep}${btn("shrink", "Fixed Zoom In")}${btn("grow", "Fixed Zoom Out")}${sep}${btn("back", "Back")}${btn("fwd", "Forward")}
          <div class="combo zoom"><select aria-label="Zoom"><option>52%</option></select>${chevron}</div>${sep}
          ${btn("draft", "Draft Mode")}${btn("focus", "Focus Data Frame")}${btn("change", "Change Layout")}${btn("ddp", "Data Driven Pages")}${more}</div>
        <div class="bar four">${grip}<button class="editor">Editor${caret}</button>${sep}${btn("editptr", "Edit")}${btn("editann", "Edit Annotation")}${sep}${btn("line", "Straight Segment")}${btn("arc", "Arc Segment")}${btn("trace", "Trace")}<button class="drop off" aria-label="Trace options">${caret}</button>${btn("point", "Point")}${sep}${btn("vertices", "Edit Vertices")}${btn("reshape", "Reshape")}${btn("cut", "Cut Polygons")}${btn("split", "Split")}${btn("rotate", "Rotate")}${sep}${btn("table", "Attributes")}${btn("sketch", "Sketch Properties")}${sep}${btn("create", "Create Features")}${more}</div>
      </section>
      <main class="work">
        <aside class="toc"><div class="pane-head"></div><div class="tools"></div><div class="tree"></div></aside>
        <div class="split"></div>
        <section class="view">
          <div class="hruler"><div class="hscale">${hcm.map((n) => html`<span class="cm ${n ? "" : "first"}">${n || nothing}</span>`)}</div></div>
          <div class="vruler"><div class="vscale">${vcm.map((n) => html`<span class="vcm ${n ? "" : "first"} ${n === 29 ? "last" : ""}">${n || nothing}</span>`)}</div></div>
          <div class="canvas"><div class="paper"><div class="frame"><span>Layers</span></div></div></div>
          <div class="vscroll"><button aria-label="Scroll up">${this.arrow("M1.500 7L5 3.500 8.500 7")}</button><div class="a"></div><div class="t"></div><div class="a"></div><button aria-label="Scroll down">${this.arrow("M1.500 3L5 6.500 8.500 3")}</button></div>
          <div class="bottom"><button class="mini" aria-label="Data View">${icon("dataview")}</button><button class="mini on" aria-label="Layout View">${icon("layoutview")}</button>${sep}<button class="mini" aria-label="Refresh">${icon("refresh")}</button><button class="mini" aria-label="Pause Drawing">${icon("pause")}</button>
            <button class="arrow" aria-label="Scroll left">${this.arrow("M7 1.500L3.500 5 7 8.500")}</button><div class="track"></div><button class="arrow" aria-label="Scroll right">${this.arrow("M3 1.500L6.500 5 3 8.500")}</button><div class="gap"></div></div>
        </section>
        <div></div>
        <aside class="create">
          <div class="pane-head"><h2>Create Features</h2><div>
            <button aria-label="Auto Hide"><svg width="8" height="10"><path d="M2.500 6V.5h3V6M.5 6.500h7M4 6.500V10M5 .5V6" stroke="#000" fill="none" /></svg></button>
            <button aria-label="Close"><svg width="9" height="9"><path d="M.5.5l8 8M8.500.5l-8 8" stroke="#000" stroke-width="1.500" /></svg></button></div></div>
          <div class="ctools">${btn("filter", "Filter")}<button class="drop off" aria-label="Filter options">${caret}</button>${btn("organize", "Organize Templates")}
            <div class="searchbox"><input aria-label="Search templates" placeholder="&lt;Search&gt;" />${caret}</div>${btn("find", "Search")}${btn("clearfind", "Clear Search")}</div>
          <div class="tlist"><p>There are no templates to show.</p></div>
          <div class="splitter"><hr /><button aria-label="Collapse"><svg width="7" height="8"><path d="M1 .5l2.500 2.500L6 .5M1 4l2.500 2.500L6 4" fill="none" stroke="#000" stroke-width="1.200" /></svg></button><button aria-label="Orientation"><svg width="7" height="7"><path d="M3.500 0v7" stroke="#000" /></svg></button></div>
          <div class="construct"><h3>${icon("create")}Construction Tools</h3><p>Select a template.</p></div>
        </aside>
        <div class="tabs">
          <button class="tab arc">${icon("toolbox")}<span>ArcToolbox</span></button>
          <button class="tab cat">${icon("catalog")}<span>Catalog</span></button>
          <button class="tab sea">${icon("search")}<span>Search</span></button>
        </div>
      </main>
      <div class="status"><div></div><div></div></div>
      <footer class="task">
        ${this.app("start", "Start", "sys")}${this.app("find", "Search", "sys")}${this.app("view", "Task View", "sys")}
        ${this.app("edge", "Edge", "edge")}${this.app("wechat", "WeChat", "run")}${this.app("qq", "QQ")}${this.app("browser", "Browser", "run")}${this.app("chrome", "Chrome", "run")}${this.app("netdisk", "Netdisk")}${this.app("folder", "File Explorer")}
        <button class="app"><span class="yd">有道</span></button>${this.app("arcmap", "ArcMap", "active")}
        <div class="tray">
          <button class="t30" aria-label="Hidden icons"><svg width="16" height="10"><path d="M1 9l7-7 7 7" fill="none" stroke="#fff" stroke-width="1.500" /></svg></button>
          <button class="t30" aria-label="Battery"><svg width="20" height="14"><path d="M6 3.500h11.500v9H3.500V8" fill="none" stroke="#fff" /><path d="M7 5.500h9v5H5.500V8zM18 6h2v4h-2z" fill="#fff" /><path d="M1.500 0v3M4.500 0v3M0 3h6v2L4 6.500V8H2V6.500L0 5z" fill="#fff" stroke="#fff" stroke-width=".8" /></svg></button>
          <button class="t30" aria-label="Network"><svg width="17" height="17"><g fill="none" stroke="#ccc" stroke-width="1.300"><path d="M.8 16Q2 3 15.500 1M4.500 16Q5 6.500 15.500 5M8 16Q9 10 15.500 9" /></g><circle cx="13.500" cy="14" r="2" fill="#fff" /></svg></button>
          <button class="t28" aria-label="Volume"><svg width="20" height="16"><path d="M1 5h3l4-3.500v13L4 11H1z" fill="none" stroke="#fff" stroke-width="1.200" /><path d="M10.500 6q1.500 2 0 4" stroke="#fff" fill="none" /><path d="M13 4q3 4 0 8M16 1.500q4 6.500 0 13" stroke="#888" fill="none" /></svg></button>
          <button class="ime">英</button>
          <button class="clock"><span>8:50<br />2021/5/27</span></button>
          <button class="bell" aria-label="Notifications"><svg width="20" height="19"><path d="M0 0h20v15h-9v4l-4-4H0z" fill="#fff" /><path d="M3.500 4.500h13M3.500 8h13M3.500 11.500h8" stroke="#2a2b2c" /></svg><span class="badge">5</span></button>
          <div class="peek"></div>
        </div>
      </footer>`;
  }
}
